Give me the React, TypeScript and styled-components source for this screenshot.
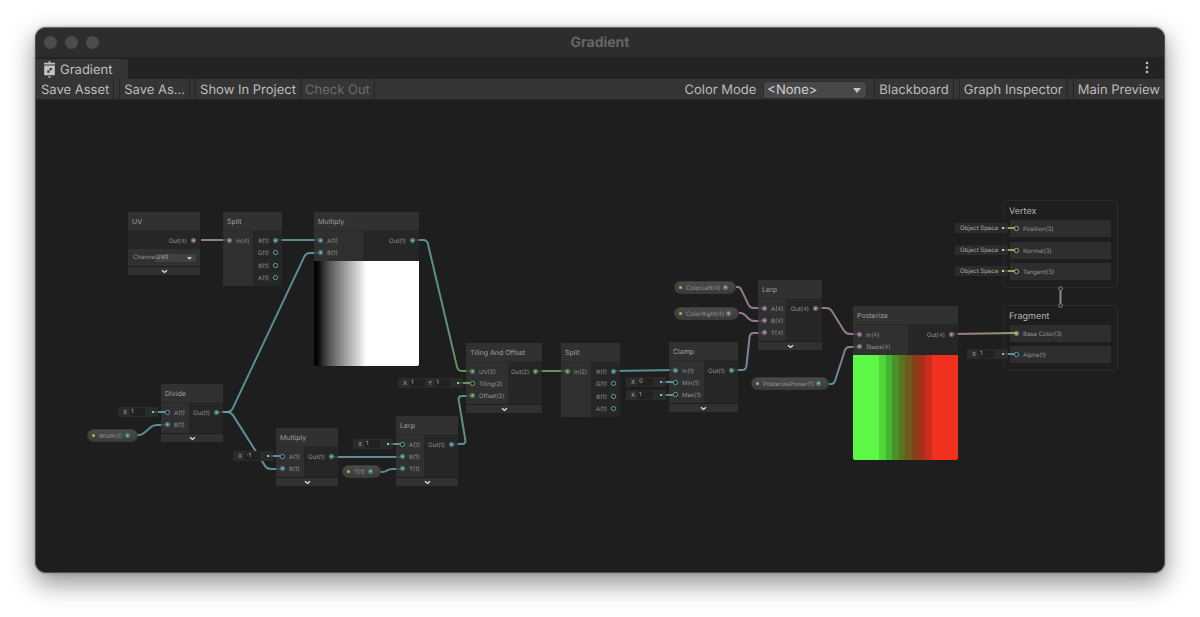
import React from "react";
import styled, { createGlobalStyle } from "styled-components";

const COLORS = {
  cyan: "#62a5aa",
  pink: "#a98aa8",
  green: "#6fa96f",
  yellow: "#b2b070",
};
type Tone = keyof typeof COLORS;

const GlobalStyle = createGlobalStyle`
  body { margin: 0; background: #fff; font-family: Inter, "Liberation Sans", sans-serif; text-rendering: geometricPrecision; }
  *, *::before, *::after { box-sizing: border-box; }
  button, input, select { font: inherit; color: inherit; margin: 0; padding: 0; border: 0; background: none; border-radius: 0; text-rendering: inherit; }
  h1, h2, h3 { margin: 0; font: inherit; }
`;

/* ---------- window chrome ---------- */

const Page = styled.div`
  min-height: 100vh;
  padding: 27px 35px 44px;
  display: flex;
`;

const Window = styled.main`
  flex: 1;
  min-width: 0;
  display: flex;
  flex-direction: column;
  overflow: hidden;
  border: 1px solid #505050;
  border-top-color: #686868;
  border-radius: 11px;
  background: #1e1e1e;
  box-shadow: 0 10px 26px rgba(0, 0, 0, 0.45), 0 0 3px rgba(0, 0, 0, 0.3);
`;

const TitleBar = styled.header`
  display: grid;
  grid-template-columns: 1fr auto 1fr;
  align-items: center;
  height: 29px;
  padding: 0 8px;
  background: #2d2d2d;
`;

const Lights = styled.div`
  display: flex;
  gap: 8px;
`;

const Light = styled.button`
  width: 13px;
  height: 13px;
  border-radius: 50%;
  background: #4c4c4c;
`;

const WindowTitle = styled.h1`
  font-size: 14px;
  line-height: 16px;
  font-weight: 700;
  color: #666;
`;

const TabStrip = styled.div`
  display: flex;
  justify-content: space-between;
  align-items: flex-end;
  height: 22px;
  background: #232323;
`;

const Tab = styled.button`
  display: flex;
  align-items: center;
  gap: 4px;
  width: 92px;
  height: 20px;
  padding: 1px 0 0 7px;
  border-radius: 0 3px 0 0;
  background: #353535;
  color: #c0c0c0;
  font-size: 13px;
  line-height: 18px;
`;

const TabName = styled.span`
  padding-top: 1px;
`;

const MenuButton = styled.button`
  width: 12px;
  height: 20px;
  margin-right: 11px;
`;

const Toolbar = styled.div`
  display: flex;
  justify-content: space-between;
  height: 21px;
  padding-left: 1px;
  background: #353535;
  border-bottom: 1px solid #262626;
  color: #bcbcbc;
  font-size: 13px;
  line-height: 18px;
  white-space: nowrap;
`;

const ToolGroup = styled.div`
  display: flex;
`;

const ToolButton = styled.button<{ $left?: boolean; $gap?: boolean; $end?: boolean }>`
  padding: 2px 4px 0;
  border-left: ${(p) => (p.$left ? "1px solid #252525" : "0")};
  border-right: ${(p) => (p.$end ? "0" : "1px solid #252525")};
  margin-left: ${(p) => (p.$gap ? "5px" : "0")};
  &:disabled { color: #6c6c6c; }
`;

const ModeField = styled.label`
  display: flex;
  align-items: center;
  gap: 7px;
  margin-right: 7px;
  padding-top: 2px;
`;

const SelectBox = styled.span`
  position: relative;
  display: flex;
  svg { position: absolute; right: 6px; top: 50%; margin-top: -2px; pointer-events: none; }
`;

const ModeSelect = styled.select`
  appearance: none;
  width: 104px;
  height: 18px;
  padding-left: 3px;
  line-height: 16px;
  border: 1px solid #2b2b2b;
  border-radius: 3px;
  background: #484848;
  color: #d0d0d0;
`;

/* ---------- graph ---------- */

const Canvas = styled.section`
  position: relative;
  flex: 1;
  min-height: 400px;
  overflow: hidden;
  background: #1e1e1e;
  font-size: 6px;
  line-height: 8px;
  color: #949494;
  white-space: nowrap;
`;

const PAN = { x: -36, y: -100 };

const World = styled.div`
  position: absolute;
  left: ${PAN.x}px;
  top: ${PAN.y}px;
`;

const Placed = styled.div<{ $x: number; $y: number; $w?: number }>`
  position: absolute;
  left: ${(p) => p.$x}px;
  top: ${(p) => p.$y}px;
  width: ${(p) => (p.$w ? `${p.$w}px` : "auto")};
`;

const WireLayer = styled.svg`
  position: absolute;
  left: 0;
  top: 0;
  width: 1px;
  height: 1px;
  overflow: visible;
  fill: none;
`;

const NodeTitle = styled.h2`
  height: 19px;
  padding: 0 4px;
  line-height: 19px;
  font-size: 7px;
  color: #a0a0a0;
  background: #313131;
  border-bottom: 1px solid #292929;
`;

const NodeBody = styled.div<{ $rows: number }>`
  display: flex;
  height: ${(p) => [0, 18, 30, 42, 55][p.$rows]}px;
`;

const PortColumn = styled.div<{ $w?: number; $out?: boolean }>`
  display: flex;
  flex-direction: column;
  width: ${(p) => (p.$w ? `${p.$w}px` : "auto")};
  flex: ${(p) => (p.$w ? "none" : "1")};
  padding: 3px 3px 2px;
  background: ${(p) => (p.$out ? "rgba(40, 40, 40, 0.8)" : "rgba(53, 53, 53, 0.8)")};
`;

const PortRow = styled.div<{ $out?: boolean; $single?: boolean }>`
  display: flex;
  align-items: center;
  flex: ${(p) => (p.$single ? "0 0 13px" : "1 1 0")};
  min-height: 0;
  gap: 3px;
  flex-direction: ${(p) => (p.$out ? "row-reverse" : "row")};
`;

const PortName = styled.span`
  padding-top: 3px;
`;

const NodeFooter = styled.button`
  display: flex;
  align-items: center;
  justify-content: center;
  width: 100%;
  height: 8px;
  margin-top: 1px;
  background: #313131;
`;

const Preview = styled.div<{ $fill: string }>`
  height: 105px;
  border-radius: 0 0 2px 2px;
  background: ${(p) => p.$fill};
`;

const ControlRow = styled.label`
  display: flex;
  align-items: center;
  height: 17px;
  padding: 0 4px 0 5px;
  background: #313131;
  svg { right: 4px; margin-top: -1px; }
`;

const ControlName = styled.span`
  width: 22px;
  overflow: hidden;
`;

const ChannelSelect = styled.select`
  appearance: none;
  width: 41px;
  height: 8px;
  padding-left: 1px;
  border-radius: 1px;
  background: #404040;
  color: #b4b4b4;
`;

const Pill = styled(Placed)`
  display: flex;
  align-items: center;
  justify-content: space-between;
  height: 13px;
  padding: 0 6px 0 4px;
  border: 1px solid #3a3a3a;
  border-radius: 7px;
  background: linear-gradient(#4a4a4a, #3b3b3b);
`;

const PillName = styled.span`
  display: flex;
  align-items: center;
  gap: 4px;
  padding-top: 2px;
  &::before { content: ""; width: 3px; height: 3px; margin: -2px 0 0; border-radius: 50%; background: #8fc850; }
`;

const Slot = styled(Placed)`
  display: flex;
  align-items: center;
`;

const SlotBox = styled.div`
  flex: 1;
  display: flex;
  align-items: center;
  height: 10px;
  padding-left: 5px;
  background: #2b2b2b;
  color: #a4a4a4;
`;

const SlotText = styled.span`
  padding-top: 1px;
`;

const SlotField = styled.label`
  display: flex;
  align-items: center;
  gap: 3px;
  margin-right: 3px;
`;

const SlotInput = styled.input`
  width: 15px;
  height: 8px;
  padding-left: 1px;
  background: #212121;
  color: #b0b0b0;
`;

const SlotLead = styled.span<{ $c: string }>`
  display: flex;
  align-items: center;
  width: 6px;
  margin-left: auto;
  &::before { content: ""; width: 2px; height: 2px; background: ${(p) => p.$c}; filter: brightness(1.2); }
  &::after { content: ""; flex: 1; height: 2px; background: ${(p) => p.$c}; opacity: 0.2; }
`;

const SlotWire = styled.span<{ $c: string }>`
  width: 7px;
  height: 2px;
  background: ${(p) => p.$c};
  opacity: 0.85;
`;

const Block = styled(Placed)`
  padding: 0 6px 7px;
  border: 1px solid #2a2a2a;
  border-radius: 4px;
`;

const BlockTitle = styled.h2`
  height: 19px;
  margin-left: -1px;
  line-height: 22px;
  font-size: 9px;
  color: #b4b4b4;
`;

const BlockRows = styled.div<{ $count: number }>`
  display: flex;
  flex-direction: column;
  justify-content: space-between;
  height: ${(p) => (p.$count === 3 ? 60 : 38)}px;
`;

const BlockRow = styled.div`
  display: flex;
  align-items: center;
  gap: 3px;
  height: 17px;
  padding: 0 3px;
  background: #2e2e2e;
`;

/* ---------- small drawings ---------- */

const PortDot = styled.svg`
  flex: none;
  fill: none;
`;

const Port = ({ tone, on }: { tone: Tone; on?: boolean }) => (
  <PortDot width="7" height="7" viewBox="0 0 7 7">
    <circle cx="3.5" cy="3.5" r="2.1" fill="#1c1c1c" stroke={COLORS[tone]} strokeWidth="1" strokeOpacity={on ? 0.75 : 1} />
    {on && <circle cx="3.5" cy="3.5" r="1.4" fill={COLORS[tone]} />}
    {on && <circle cx="3.5" cy="3.5" r="0.8" fill="#fff" fillOpacity="0.3" />}
  </PortDot>
);

const Chevron = () => (
  <svg width="7" height="5" viewBox="0 0 7 5" fill="none">
    <path d="M1 1.2 L3.5 3.4 L6 1.2" stroke="#e4e4e4" strokeWidth="1.3" />
  </svg>
);

const Arrow = ({ w, h, color }: { w: number; h: number; color: string }) => (
  <svg width={w} height={h} viewBox="0 0 8 4" preserveAspectRatio="none">
    <path d="M0 0H8L4 4Z" fill={color} />
  </svg>
);

const GraphIcon = () => (
  <svg width="13" height="17" viewBox="0 0 13 17">
    <path d="M5.5 0h2v2h-2zM5.5 15h2v2h-2z" fill="#a8a8a8" />
    <path d="M1 1.8h11v1.7H1z" fill="#c4c4c4" />
    <path d="M1.2 4.5h10.6v9.7H1.2z" fill="#c4c4c4" />
    <path d="M6.6 7h2.3v2.3H6.6zM4.2 9.4h2.3v2.3H4.2z" fill="#3c3c3c" />
    <path d="M5.8 10L7.4 8.4" stroke="#3c3c3c" strokeWidth="0.8" />
  </svg>
);

/* ---------- data ---------- */

interface PortSpec { name: string; tone: Tone; on?: boolean }
interface NodeSpec {
  title: string; x: number; y: number; w: number; inW?: number;
  ins: PortSpec[]; outs: PortSpec[]; footer?: boolean; preview?: string; channel?: boolean;
}

const p = (name: string, tone: Tone, on = true): PortSpec => ({ name, tone, on });

const rampFill =
  "linear-gradient(90deg, #000 0%, #0a0a0a 4%, #333 9%, #5c5c5c 16%, #888 25%, #b0b0b0 34%, #dadada 43%, #fff 50%)";

const bands = ["#50d63a", "#45b433", "#49922a", "#587420", "#6d5a1c", "#853f1a", "#a63019", "#cb2c1b"];
const bandFill = `linear-gradient(90deg, #5df845 25%, ${bands
  .map((c, i) => `${c} ${25 + (i * 50) / 8}% ${25 + ((i + 1) * 50) / 8}%`)
  .join(", ")}, #f1301f 75%)`;

const splitOuts = [p("R(1)", "cyan"), p("G(1)", "cyan", false), p("B(1)", "cyan", false), p("A(1)", "cyan", false)];

const NODES: NodeSpec[] = [
  { title: "UV", x: 128, y: 212, w: 72, ins: [], outs: [p("Out(4)", "pink")], footer: true, channel: true },
  { title: "Split", x: 223, y: 212, w: 59, inW: 30, ins: [p("In(4)", "pink")], outs: splitOuts },
  { title: "Multiply", x: 314, y: 212, w: 105, inW: 49, ins: [p("A(1)", "cyan"), p("B(1)", "cyan")], outs: [p("Out(1)", "cyan")], preview: rampFill },
  { title: "Divide", x: 161, y: 384, w: 62, inW: 28, ins: [p("A(1)", "cyan", false), p("B(1)", "cyan")], outs: [p("Out(1)", "cyan")], footer: true },
  { title: "Multiply", x: 276, y: 428, w: 62, inW: 28, ins: [p("A(1)", "cyan", false), p("B(1)", "cyan")], outs: [p("Out(1)", "cyan")], footer: true },
  { title: "Lerp", x: 396, y: 416, w: 62, inW: 28, ins: [p("A(1)", "cyan", false), p("B(1)", "cyan"), p("T(1)", "cyan")], outs: [p("Out(1)", "cyan")], footer: true },
  { title: "Tiling And Offset", x: 466, y: 343, w: 76, inW: 42, ins: [p("UV(2)", "green"), p("Tiling(2)", "green", false), p("Offset(2)", "green")], outs: [p("Out(2)", "green")], footer: true },
  { title: "Split", x: 561, y: 343, w: 59, inW: 30, ins: [p("In(2)", "green")], outs: splitOuts },
  { title: "Clamp", x: 669, y: 342, w: 69, inW: 35, ins: [p("In(1)", "cyan"), p("Min(1)", "cyan", false), p("Max(1)", "cyan", false)], outs: [p("Out(1)", "cyan")], footer: true },
  { title: "Lerp", x: 758, y: 280, w: 64, inW: 28, ins: [p("A(4)", "pink"), p("B(4)", "pink"), p("T(4)", "pink")], outs: [p("Out(4)", "pink")], footer: true },
  { title: "Posterize", x: 853, y: 306, w: 105, inW: 55, ins: [p("In(4)", "pink"), p("Steps(4)", "pink")], outs: [p("Out(4)", "pink")], preview: bandFill },
];

const PILLS: { name: string; x: number; y: number; w: number; tone: Tone }[] = [
  { name: "Width(1)", x: 87, y: 429, w: 51, tone: "cyan" },
  { name: "T(1)", x: 342, y: 465, w: 39, tone: "cyan" },
  { name: "ColorLeft(4)", x: 674, y: 281, w: 62, tone: "pink" },
  { name: "ColorRight(4)", x: 674, y: 307, w: 65, tone: "pink" },
  { name: "PosterizePower(1)", x: 751, y: 377, w: 78, tone: "cyan" },
];

interface SlotSpec { x: number; y: number; w: number; tone: Tone; text?: string; fields?: [string, string][] }
const SLOTS: SlotSpec[] = [
  { x: 118, y: 407, w: 47, tone: "cyan", fields: [["X", "1"]] },
  { x: 233, y: 451, w: 47, tone: "cyan", fields: [["X", "-1"]] },
  { x: 353, y: 439, w: 47, tone: "cyan", fields: [["X", "1"]] },
  { x: 398, y: 378, w: 72, tone: "green", fields: [["X", "1"], ["Y", "1"]] },
  { x: 626, y: 377, w: 47, tone: "cyan", fields: [["X", "0"]] },
  { x: 626, y: 390, w: 47, tone: "cyan", fields: [["X", "1"]] },
  { x: 955, y: 223, w: 60, tone: "yellow", text: "Object Space" },
  { x: 955, y: 245, w: 60, tone: "yellow", text: "Object Space" },
  { x: 955, y: 266, w: 60, tone: "yellow", text: "Object Space" },
  { x: 967, y: 349, w: 48, tone: "cyan", fields: [["X", "1"]] },
];

const BLOCKS: { title: string; y: number; rows: PortSpec[] }[] = [
  { title: "Vertex", y: 200, rows: [p("Position(3)", "yellow", false), p("Normal(3)", "yellow", false), p("Tangent(3)", "yellow", false)] },
  { title: "Fragment", y: 305, rows: [p("Base Color(3)", "yellow"), p("Alpha(1)", "cyan", false)] },
];

type Pt = [number, number];
const WIRES: { from: Tone; to: Tone; pts: Pt[] }[] = [
  { from: "pink", to: "pink", pts: [[201, 240], [229, 240]] },
  { from: "cyan", to: "cyan", pts: [[275, 240], [320, 240]] },
  { from: "cyan", to: "green", pts: [[413, 240], [427, 240], [458, 371], [472, 371]] },
  { from: "cyan", to: "cyan", pts: [[217, 412], [231, 412], [306, 253], [320, 253]] },
  { from: "cyan", to: "cyan", pts: [[217, 412], [231, 412], [267, 469], [282, 469]] },
  { from: "cyan", to: "cyan", pts: [[137, 435], [142, 435], [153, 425], [167, 425]] },
  { from: "cyan", to: "cyan", pts: [[380, 472], [385, 472], [389, 469], [402, 469]] },
  { from: "cyan", to: "cyan", pts: [[331, 457], [402, 457]] },
  { from: "cyan", to: "green", pts: [[452, 444], [466, 444], [458, 396], [472, 396]] },
  { from: "green", to: "green", pts: [[536, 371], [568, 371]] },
  { from: "cyan", to: "cyan", pts: [[613, 371], [675, 370]] },
  { from: "pink", to: "pink", pts: [[736, 287], [740, 287], [750, 308], [764, 308]] },
  { from: "pink", to: "pink", pts: [[739, 313], [743, 313], [751, 321], [764, 321]] },
  { from: "cyan", to: "pink", pts: [[732, 370], [746, 370], [750, 333], [764, 333]] },
  { from: "pink", to: "pink", pts: [[816, 308], [830, 308], [846, 334], [859, 334]] },
  { from: "cyan", to: "pink", pts: [[829, 384], [834, 384], [846, 347], [859, 347]] },
  { from: "pink", to: "yellow", pts: [[952, 334], [1016, 333]] },
];

/* Polyline with each inner corner rounded off by a quadratic curve. */
function roundedPath(pts: Pt[], radius = 4): string {
  let d = `M${pts[0][0]} ${pts[0][1]}`;
  for (let i = 1; i < pts.length - 1; i++) {
    const toward = (q: Pt): Pt => {
      const dx = q[0] - pts[i][0];
      const dy = q[1] - pts[i][1];
      const len = Math.hypot(dx, dy);
      const r = Math.min(radius, len / 2);
      return [pts[i][0] + (dx / len) * r, pts[i][1] + (dy / len) * r];
    };
    const a = toward(pts[i - 1]);
    const b = toward(pts[i + 1]);
    d += ` L${a[0]} ${a[1]} Q${pts[i][0]} ${pts[i][1]} ${b[0]} ${b[1]}`;
  }
  const end = pts[pts.length - 1];
  return `${d} L${end[0]} ${end[1]}`;
}

/* ---------- composed parts ---------- */

const Wires = () => (
  <WireLayer aria-hidden="true">
    {WIRES.map((w, i) => {
      const a = w.pts[0];
      const b = w.pts[w.pts.length - 1];
      const mixed = w.from !== w.to;
      return (
        <g key={i}>
          {mixed && (
            <linearGradient id={`wire${i}`} gradientUnits="userSpaceOnUse" x1={a[0]} y1={a[1]} x2={b[0]} y2={b[1]}>
              <stop offset="0" stopColor={COLORS[w.from]} />
              <stop offset="1" stopColor={COLORS[w.to]} />
            </linearGradient>
          )}
          <path d={roundedPath(w.pts)} stroke={mixed ? `url(#wire${i})` : COLORS[w.from]} strokeWidth="2" strokeOpacity="0.85" />
        </g>
      );
    })}
    <g stroke="#8c8c8c">
      <path d="M1060.5 290.5V304" strokeWidth="2" />
      <circle cx="1060.5" cy="288.7" r="1.8" fill="#1e1e1e" />
      <circle cx="1060.5" cy="305.5" r="1.8" fill="#1e1e1e" />
    </g>
  </WireLayer>
);

const GraphNode = ({ node }: { node: NodeSpec }) => (
  <Placed as="article" $x={node.x} $y={node.y} $w={node.w}>
    <NodeTitle>{node.title}</NodeTitle>
    <NodeBody $rows={Math.max(node.ins.length, node.outs.length)}>
      {node.ins.length > 0 && (
        <PortColumn $w={node.inW}>
          {node.ins.map((q) => (
            <PortRow key={q.name} $single={node.ins.length === 1}>
              <Port tone={q.tone} on={q.on} />
              <PortName>{q.name}</PortName>
            </PortRow>
          ))}
        </PortColumn>
      )}
      <PortColumn $out>
        {node.outs.map((q) => (
          <PortRow key={q.name} $out $single={node.outs.length === 1}>
            <Port tone={q.tone} on={q.on} />
            <PortName>{q.name}</PortName>
          </PortRow>
        ))}
      </PortColumn>
    </NodeBody>
    {node.channel && (
      <ControlRow>
        <ControlName>Channe</ControlName>
        <SelectBox>
          <ChannelSelect defaultValue="UV0">
            <option>UV0</option>
          </ChannelSelect>
          <Arrow w={5} h={3} color="#c4c4c4" />
        </SelectBox>
      </ControlRow>
    )}
    {node.preview && <Preview $fill={node.preview} />}
    {node.footer && (
      <NodeFooter aria-label={`Collapse ${node.title}`}>
        <Chevron />
      </NodeFooter>
    )}
  </Placed>
);

export default function App() {
  return (
    <Page>
      <GlobalStyle />
      <Window>
        <TitleBar>
          <Lights>
            <Light aria-label="Close" />
            <Light aria-label="Minimize" />
            <Light aria-label="Zoom" />
          </Lights>
          <WindowTitle>Gradient</WindowTitle>
        </TitleBar>
        <TabStrip>
          <Tab>
            <GraphIcon />
            <TabName>Gradient</TabName>
          </Tab>
          <MenuButton aria-label="Window menu">
            <svg width="12" height="18" viewBox="0 0 12 18" fill="#c4c4c4">
              <circle cx="6" cy="4" r="1.3" />
              <circle cx="6" cy="8.5" r="1.3" />
              <circle cx="6" cy="13" r="1.3" />
            </svg>
          </MenuButton>
        </TabStrip>
        <Toolbar>
          <ToolGroup>
            <ToolButton>Save Asset</ToolButton>
            <ToolButton $left $gap>Save As...</ToolButton>
            <ToolButton $left $gap>Show In Project</ToolButton>
            <ToolButton disabled>Check Out</ToolButton>
          </ToolGroup>
          <ToolGroup>
            <ModeField>
              Color Mode
              <SelectBox>
                <ModeSelect defaultValue="<None>">
                  <option>{"<None>"}</option>
                </ModeSelect>
                <Arrow w={8} h={5} color="#c4c4c4" />
              </SelectBox>
            </ModeField>
            <ToolButton $left>Blackboard</ToolButton>
            <ToolButton $left $gap>Graph Inspector</ToolButton>
            <ToolButton $left $gap $end>Main Preview</ToolButton>
          </ToolGroup>
        </Toolbar>
        <Canvas>
          <World>
            {BLOCKS.map((b) => (
              <Block key={b.title} $x={1003} $y={b.y} $w={115}>
                <BlockTitle>{b.title}</BlockTitle>
                <BlockRows $count={b.rows.length}>
                  {b.rows.map((q) => (
                    <BlockRow key={q.name}>
                      <Port tone={q.tone} on={q.on} />
                      <PortName>{q.name}</PortName>
                    </BlockRow>
                  ))}
                </BlockRows>
              </Block>
            ))}
            <Wires />
            {NODES.map((n, i) => (
              <GraphNode key={i} node={n} />
            ))}
            {PILLS.map((q) => (
              <Pill key={q.name} $x={q.x} $y={q.y} $w={q.w}>
                <PillName>{q.name}</PillName>
                <Port tone={q.tone} on />
              </Pill>
            ))}
            {SLOTS.map((s, i) => (
              <Slot key={i} $x={s.x} $y={s.y} $w={s.w}>
                <SlotBox>
                  {s.text && <SlotText>{s.text}</SlotText>}
                  {s.fields?.map(([label, value]) => (
                    <SlotField key={label}>
                      <SlotText>{label}</SlotText>
                      <SlotInput defaultValue={value} />
                    </SlotField>
                  ))}
                  <SlotLead $c={COLORS[s.tone]} />
                </SlotBox>
                <SlotWire $c={COLORS[s.tone]} />
              </Slot>
            ))}
          </World>
        </Canvas>
      </Window>
    </Page>
  );
}
